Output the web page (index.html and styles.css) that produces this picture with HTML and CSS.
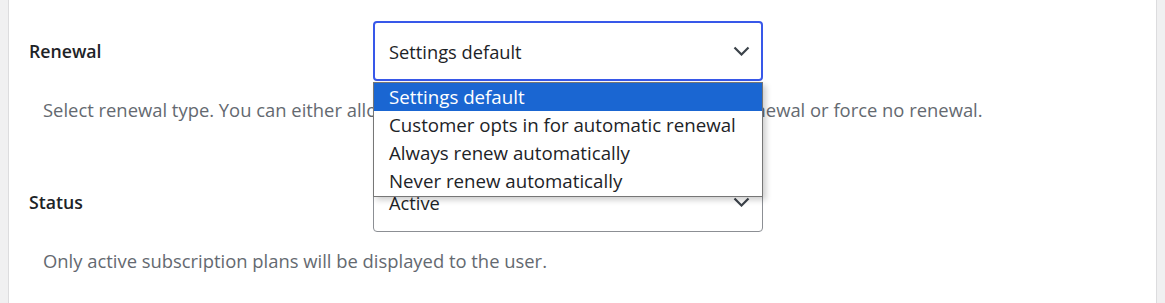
FILE: index.html
```html
<!DOCTYPE html>
<html lang="en">
  <head>
    <meta charset="UTF-8" />
    <title>Subscription plan settings</title>
    <link rel="stylesheet" href="styles.css">
  </head>
  <body>
    <div class="panel">
      <div class="field">
        <div class="field-row">
          <label class="field-label" for="renewal">Renewal</label>
          <div class="select-wrap">
            <div class="select is-focused" id="renewal">
              <span>Settings default</span>
              <svg class="chevron" width="17" height="10" viewBox="0 0 17 10"><path d="M1.5 1.5 8.5 8.5l7-7" fill="none" stroke="#3c434a" stroke-width="2.2"/></svg>
            </div>
            <ul class="dropdown">
              <li class="selected">Settings default</li>
              <li>Customer opts in for automatic renewal</li>
              <li>Always renew automatically</li>
              <li>Never renew automatically</li>
            </ul>
          </div>
        </div>
        <p class="field-desc">Select renewal type. You can either allow the customer to opt in, force automatic renewal or force no renewal.</p>
      </div>

      <div class="field">
        <div class="field-row">
          <label class="field-label" for="status">Status</label>
          <div class="select-wrap">
            <div class="select" id="status">
              <span>Active</span>
              <svg class="chevron" width="17" height="10" viewBox="0 0 17 10"><path d="M1.5 1.5 8.5 8.5l7-7" fill="none" stroke="#3c434a" stroke-width="2.2"/></svg>
            </div>
          </div>
        </div>
        <p class="field-desc">Only active subscription plans will be displayed to the user.</p>
      </div>
    </div>
  </body>
</html>
```

FILE: styles.css
```css
body {
    margin: 0;
    background-color: #f0f0f1;
    font-family: "Open Sans", "Noto Sans", sans-serif;
    color: #1d2327;
}

.panel {
    margin: 0 8px;
    height: 303px;
    box-sizing: border-box;
    padding-top: 21px;
    background-color: #fff;
    border-left: 1px solid #dcdcde;
    border-right: 1px solid #dcdcde;
}

.field {
    margin-bottom: 50px;
}

.field-row {
    display: grid;
    grid-template-columns: 344px 390px;
    align-items: center;
    padding-left: 20px;
}

.field-label {
    font-size: 17.7px;
    font-weight: 600;
}

.select-wrap {
    position: relative;
}

.select {
    height: 60px;
    box-sizing: border-box;
    display: flex;
    align-items: center;
    justify-content: space-between;
    padding: 0 12px 0 15px;
    border: 1px solid #8c8f94;
    border-radius: 4px;
    font-size: 18.3px;
    background-color: #fff;
}

.select.is-focused {
    border: 2px solid #3858e9;
    padding-left: 14px;
    padding-right: 11px;
}

/* open list of the first select */
.dropdown {
    position: absolute;
    top: 61px;
    left: 0;
    width: 390px;
    box-sizing: border-box;
    margin: 0;
    padding: 0 0 1px;
    list-style: none;
    background-color: #fff;
    border: 1px solid #767676;
    box-shadow: 3px 3px 6px rgba(0, 0, 0, 0.2);
    z-index: 10;
}

.dropdown li {
    height: 28px;
    line-height: 28px;
    padding-left: 15px;
    font-size: 18.7px;
    color: #1d2327;
}

.dropdown li.selected {
    background-color: #1a66d2;
    color: #fff;
}

.field-desc {
    margin: 17px 0 0 34px;
    font-size: 18.4px;
    line-height: 24px;
    color: #646970;
}
```
